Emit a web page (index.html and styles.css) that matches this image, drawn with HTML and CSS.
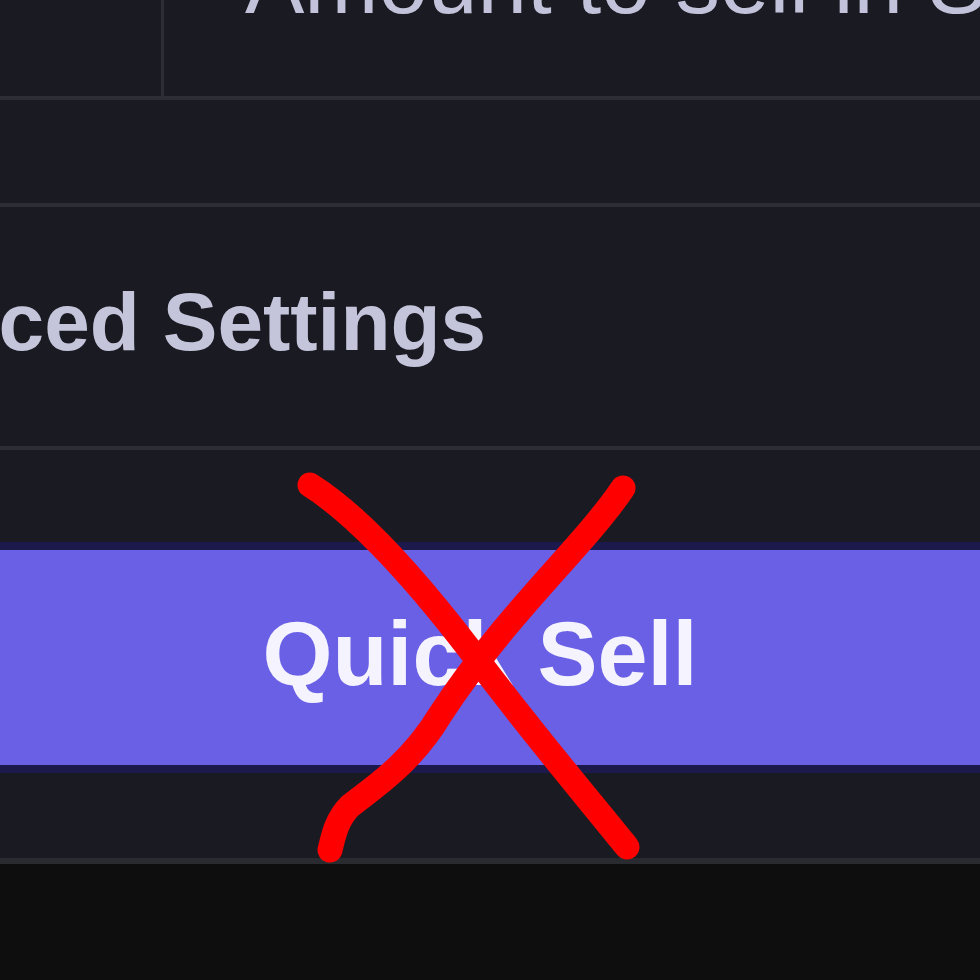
FILE: index.html
```html
<!DOCTYPE html>
<html lang="en">

<head>
    <meta charset="UTF-8">
    <meta name="viewport" content="width=device-width, initial-scale=1.0">
    <title>Quick Sell</title>
    <link rel="stylesheet" href="styles.css">
</head>

<body>
    <div class="panel">
        <div class="amount-row">
            <div class="unit-cell"></div>
            <div class="amount-cell">
                <span class="amount-text">Amount to sell in SOL</span>
            </div>
        </div>

        <div class="blank-row"></div>

        <div class="settings-row">
            <span class="settings-text">Advanced Settings</span>
        </div>

        <div class="action-row">
            <button class="quick-sell">Quick Sell</button>
        </div>
    </div>

    <div class="page-bottom"></div>

    <!-- red cross drawn over the screenshot -->
    <svg class="cross" width="980" height="980" viewBox="0 0 980 980">
        <path d="M310 485 C 350 510, 405 565, 470 650 C 530 730, 585 795, 627 847" />
        <path d="M623 488 C 585 545, 505 615, 440 715 C 410 765, 370 790, 350 806 C 336 820, 333 838, 330 850" />
    </svg>
</body>

</html>
```

FILE: styles.css
```css
body {
    margin: 0;
    padding: 0;
    background: #0e0e0e;
    font-family: 'Liberation Sans', Arial, sans-serif;
    overflow: hidden;
}

.panel {
    background: #1a1b22;
    height: 858px;
    border-bottom: 6px solid #2a2b31;
}

.amount-row {
    display: flex;
    height: 96px;
    border-bottom: 4px solid #2c2d35;
}

.unit-cell {
    width: 161px;
    border-right: 3px solid #2c2d35;
}

.amount-cell {
    flex: 1;
    overflow: hidden;
    padding-left: 81px;
}

.amount-text {
    display: block;
    margin-top: -68px;
    font-size: 89px;
    line-height: 100px;
    color: #c2c3da;
    white-space: nowrap;
}

.blank-row {
    height: 103px;
    border-bottom: 4px solid #2c2d35;
}

.settings-row {
    height: 165px;
    padding-top: 74px;
    border-bottom: 4px solid #2c2d35;
    overflow: hidden;
}

.settings-text {
    display: block;
    margin-left: -252px;
    font-size: 82px;
    font-weight: 700;
    line-height: 82px;
    color: #c4c5db;
    white-space: nowrap;
}

.action-row {
    padding-top: 92px;
}

.quick-sell {
    display: block;
    width: 1020px;
    margin-left: -30px;
    height: 231px;
    background: #6a60e6;
    border: none;
    border-top: 8px solid #1c1a4c;
    border-bottom: 8px solid #1c1a4c;
    color: #f4f3ff;
    font-family: 'Liberation Sans', Arial, sans-serif;
    font-weight: 700;
    font-size: 90px;
    padding: 0 0 6px 0;
    cursor: pointer;
}

.page-bottom {
    height: 116px;
}

.cross {
    position: absolute;
    top: 0;
    left: 0;
    pointer-events: none;
}

.cross path {
    fill: none;
    stroke: #ff0000;
    stroke-width: 25;
    stroke-linecap: round;
    stroke-linejoin: round;
}
```
